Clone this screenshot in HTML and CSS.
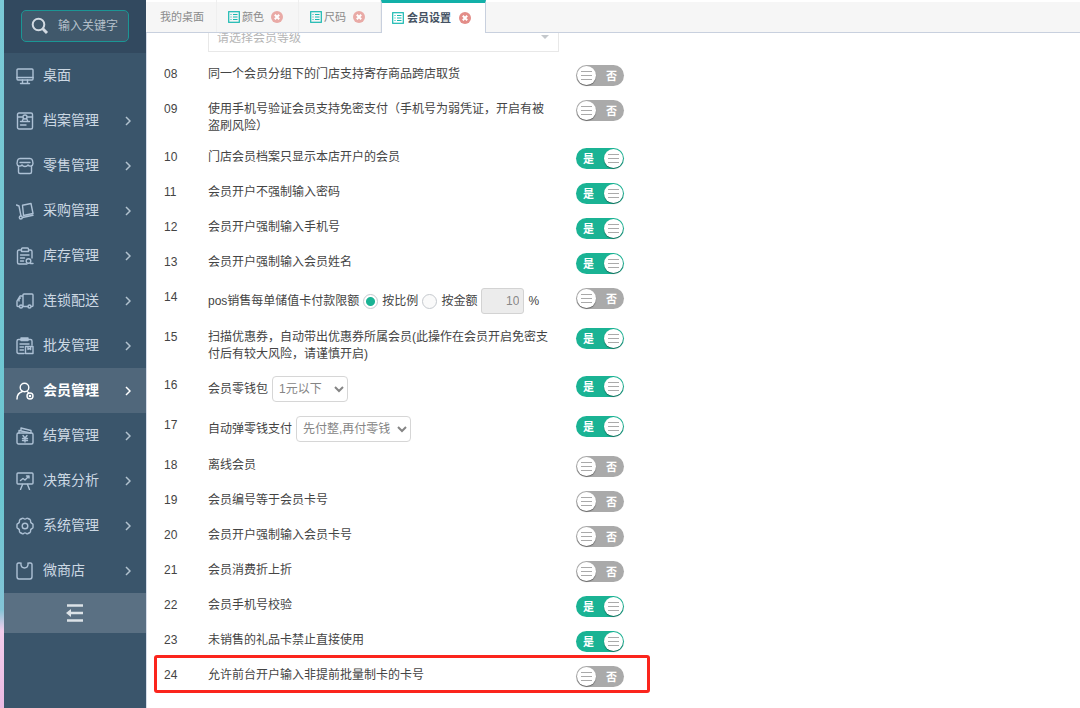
FILE: index.html
```
<!DOCTYPE html>
<html lang="zh-CN">
<head>
<meta charset="utf-8">
<title>会员设置</title>
<link rel="stylesheet" href="styles.css">
</head>
<body>
<div class="app">
  <aside class="sidebar">
    <div class="search-area">
      <label class="search">
        <svg class="search-icon" viewBox="0 0 18 18"><circle cx="7.5" cy="7.5" r="5.8"/><path d="M11.8 11.8 16 16" stroke-width="3"/></svg>
        <input type="text" placeholder="输入关键字" aria-label="输入关键字">
      </label>
    </div>
    <nav class="menu">
      <a class="item" href="#"><svg class="icon" viewBox="0 0 18 18"><rect x="1" y="2" width="16" height="11" rx="1"/><path d="M1 10.500H17M6.500 13v3M11.500 13v3M4.500 16.500h9"/></svg><span>桌面</span></a>
      <a class="item" href="#"><svg class="icon" viewBox="0 0 18 18"><rect x="1.500" y="1" width="15" height="16" rx="1.500"/><path d="M2 5h4.500M11.500 5h5M4.500 9.500h9M4.500 13h5.500"/><circle cx="9" cy="5" r="2"/><path d="M7.500 6.500 6.500 8.500M10.500 6.500l1 2"/></svg><span>档案管理</span><svg class="arrow" viewBox="0 0 6 10"><path d="m1 1 4 4-4 4"/></svg></a>
      <a class="item" href="#"><svg class="icon" viewBox="0 0 18 18"><path d="M4 1.500h10q2 0 2.500 2l.5 3q0 2-2 2.500-2 .5-3-1-1 1.500-3 1.500T6 8q-1 1.500-3 1T1 6.500l.5-3q.5-2 2.500-2ZM4 5.500h10M2.500 9v6q0 1.500 1.500 1.500h10q1.500 0 1.500-1.500V9"/></svg><span>零售管理</span><svg class="arrow" viewBox="0 0 6 10"><path d="m1 1 4 4-4 4"/></svg></a>
      <a class="item" href="#"><svg class="icon" viewBox="0 0 18 18"><path d="M.5 3 3 4l2 10M6.500 3.200 15 1.500l2 10-9.500 2ZM6.500 15.500 17 13.200"/><circle cx="4.800" cy="15.500" r="1.500"/></svg><span>采购管理</span><svg class="arrow" viewBox="0 0 6 10"><path d="m1 1 4 4-4 4"/></svg></a>
      <a class="item" href="#"><svg class="icon" viewBox="0 0 18 18"><path d="M5 3H3Q1.500 3 1.500 4.500v11Q1.500 17 3 17h8M13 3h1.500Q16 3 16 4.500V11M5.500 4.500V2q0-1 1-1h5q1 0 1 1v2.500ZM4.500 8h8.500M4.500 11h4M4.500 14h3M14.500 16.500H17"/><circle cx="12.500" cy="14" r="2.300"/></svg><span>库存管理</span><svg class="arrow" viewBox="0 0 6 10"><path d="m1 1 4 4-4 4"/></svg></a>
      <a class="item" href="#"><svg class="icon" viewBox="0 0 18 18"><path d="M3.500 14.500H2q-1 0-1-1V9l3-5h3v10.500h-.5M7 4V3q0-1 1-1h8q1 0 1 1v10.500q0 1-1 1h-.5M12 14.500H7M3 9V7l1.500-1"/><circle cx="5" cy="14.500" r="1.500"/><circle cx="13.500" cy="14.500" r="1.500"/></svg><span>连锁配送</span><svg class="arrow" viewBox="0 0 6 10"><path d="m1 1 4 4-4 4"/></svg></a>
      <a class="item" href="#"><svg class="icon" viewBox="0 0 18 18"><path d="M8 16.500H2.500Q1 16.500 1 15V4q0-1.500 1.500-1.500h12Q16 2.500 16 4v4M5 1h7v2.500H5ZM4 7h9M4 10h3.500M4 13h3.500M9.500 9.500h7.500v7H9.500ZM12 9.500v3l1.300-1 1.300 1v-3"/></svg><span>批发管理</span><svg class="arrow" viewBox="0 0 6 10"><path d="m1 1 4 4-4 4"/></svg></a>
      <a class="item active" href="#"><svg class="icon" viewBox="0 0 18 18"><circle cx="8.500" cy="5.500" r="4.300"/><path d="M1 17q0-6 5.500-7.500M11 9.500l1.500 1"/><circle cx="14" cy="14" r="3"/><circle cx="14" cy="14" r=".6"/></svg><span>会员管理</span><svg class="arrow" viewBox="0 0 6 10"><path d="m1 1 4 4-4 4"/></svg></a>
      <a class="item" href="#"><svg class="icon" viewBox="0 0 18 18"><rect x="1" y="6" width="16" height="11" rx="1.500"/><path d="M3 6V3.500L14.500 6M5 3.500V1l10 2.500V6M7 8.500l2 2.500 2-2.500M9 11v4M6.500 11.500h5M6.500 13.500h5"/></svg><span>结算管理</span><svg class="arrow" viewBox="0 0 6 10"><path d="m1 1 4 4-4 4"/></svg></a>
      <a class="item" href="#"><svg class="icon" viewBox="0 0 18 18"><rect x="1" y="1" width="16" height="11" rx="1"/><path d="m4.500 8.500 2.500-2 2 1.500 4-4M10.500 4H13v2M6.500 12.500l-2 5M11.500 12.500l2 5"/></svg><span>决策分析</span><svg class="arrow" viewBox="0 0 6 10"><path d="m1 1 4 4-4 4"/></svg></a>
      <a class="item" href="#"><svg class="icon" viewBox="0 0 18 18"><path d="M6 1.500q.8-.8 1.500 0 1.500 1.200 3 0 .7-.8 1.500 0l2 1q.8.500.5 1.500-.2 1.800 1.500 2.500 1 .3 1 1v3q0 .7-1 1-1.700.7-1.500 2.500.3 1-.5 1.500l-2 1q-.8.800-1.500 0-1.500-1.200-3 0-.7.800-1.500 0l-2-1q-.8-.5-.5-1.500.2-1.800-1.500-2.500-1-.3-1-1v-3q0-.7 1-1 1.700-.7 1.500-2.500-.3-1 .5-1.500Z"/><circle cx="9" cy="9" r="2.800"/></svg><span>系统管理</span><svg class="arrow" viewBox="0 0 6 10"><path d="m1 1 4 4-4 4"/></svg></a>
      <a class="item" href="#"><svg class="icon" viewBox="0 0 18 18"><path d="M4 1H2.500Q1 1 1 2.500v12Q1 17 3 17h11q2 0 2-2.500v-12Q16 1 14.500 1H13M5 1v2q.5 3 3.500 3T12 3V1"/></svg><span>微商店</span><svg class="arrow" viewBox="0 0 6 10"><path d="m1 1 4 4-4 4"/></svg></a>
    </nav>
    <button class="collapse" type="button" aria-label="收起菜单"><svg viewBox="0 0 18 18"><path d="M1 1.500h16M4 9h13M1 16.500h16"/><path class="solid" d="M0 9l5-4v8Z"/></svg></button>
  </aside>

  <div class="workspace">
    <div class="tabs">
      <a class="tab home" href="#">我的桌面</a>
      <div class="tab"><svg class="tab-icon" viewBox="0 0 12 12"><rect x=".7" y=".7" width="10.600" height="10.600"/><path d="M2.500 3.500h1M5 3.500h4.500M2.500 6h1M5 6h4.500M2.500 8.500h1M5 8.500h4.500"/></svg><a href="#">颜色</a><button class="close" type="button" aria-label="关闭"><svg viewBox="0 0 12 12"><circle cx="6" cy="6" r="6"/><path d="m3.800 3.800 4.400 4.400M8.200 3.800 3.800 8.200"/></svg></button></div>
      <div class="tab"><svg class="tab-icon" viewBox="0 0 12 12"><rect x=".7" y=".7" width="10.600" height="10.600"/><path d="M2.500 3.500h1M5 3.500h4.500M2.500 6h1M5 6h4.500M2.500 8.500h1M5 8.500h4.500"/></svg><a href="#">尺码</a><button class="close" type="button" aria-label="关闭"><svg viewBox="0 0 12 12"><circle cx="6" cy="6" r="6"/><path d="m3.800 3.800 4.400 4.400M8.200 3.800 3.800 8.200"/></svg></button></div>
      <div class="tab current"><svg class="tab-icon" viewBox="0 0 12 12"><rect x=".7" y=".7" width="10.600" height="10.600"/><path d="M2.500 3.500h1M5 3.500h4.500M2.500 6h1M5 6h4.500M2.500 8.500h1M5 8.500h4.500"/></svg><a href="#">会员设置</a><button class="close" type="button" aria-label="关闭"><svg viewBox="0 0 12 12"><circle cx="6" cy="6" r="6"/><path d="m3.800 3.800 4.400 4.400M8.200 3.800 3.800 8.200"/></svg></button></div>
    </div>

    <main class="content">
      <div class="settings">
        <div class="row level">
          <div class="level-field">
            <select aria-label="会员等级"><option>请选择会员等级</option></select>
            <svg viewBox="0 0 8 4"><path d="M0 0h8L4 4Z"/></svg>
          </div>
        </div>
        <div class="row"><span class="num">08</span><label class="text" for="s08">同一个会员分组下的门店支持寄存商品跨店取货</label><span class="switch"><input type="checkbox" id="s08"><span class="yes">是</span><span class="no">否</span></span></div>
        <div class="row"><span class="num">09</span><label class="text" for="s09">使用手机号验证会员支持免密支付（手机号为弱凭证，开启有被盗刷风险）</label><span class="switch"><input type="checkbox" id="s09"><span class="yes">是</span><span class="no">否</span></span></div>
        <div class="row"><span class="num">10</span><label class="text" for="s10">门店会员档案只显示本店开户的会员</label><span class="switch"><input type="checkbox" id="s10" checked><span class="yes">是</span><span class="no">否</span></span></div>
        <div class="row"><span class="num">11</span><label class="text" for="s11">会员开户不强制输入密码</label><span class="switch"><input type="checkbox" id="s11" checked><span class="yes">是</span><span class="no">否</span></span></div>
        <div class="row"><span class="num">12</span><label class="text" for="s12">会员开户强制输入手机号</label><span class="switch"><input type="checkbox" id="s12" checked><span class="yes">是</span><span class="no">否</span></span></div>
        <div class="row"><span class="num">13</span><label class="text" for="s13">会员开户强制输入会员姓名</label><span class="switch"><input type="checkbox" id="s13" checked><span class="yes">是</span><span class="no">否</span></span></div>
        <div class="row"><span class="num">14</span><div class="text fields"><label for="s14">pos销售每单储值卡付款限额</label><label class="choice"><input type="radio" name="limit" checked>按比例</label><label class="choice"><input type="radio" name="limit">按金额</label><input class="amount" type="text" value="10" aria-label="限额" disabled><span>%</span></div><span class="switch"><input type="checkbox" id="s14"><span class="yes">是</span><span class="no">否</span></span></div>
        <div class="row"><span class="num">15</span><label class="text" for="s15">扫描优惠券，自动带出优惠券所属会员(此操作在会员开启免密支付后有较大风险，请谨慎开启)</label><span class="switch"><input type="checkbox" id="s15" checked><span class="yes">是</span><span class="no">否</span></span></div>
        <div class="row"><span class="num">16</span><div class="text fields"><label for="s16">会员零钱包</label><select class="pick short" aria-label="会员零钱包"><option>1元以下</option></select></div><span class="switch"><input type="checkbox" id="s16" checked><span class="yes">是</span><span class="no">否</span></span></div>
        <div class="row"><span class="num">17</span><div class="text fields"><label for="s17">自动弹零钱支付</label><select class="pick" aria-label="自动弹零钱支付"><option>先付整,再付零钱</option></select></div><span class="switch"><input type="checkbox" id="s17" checked><span class="yes">是</span><span class="no">否</span></span></div>
        <div class="row"><span class="num">18</span><label class="text" for="s18">离线会员</label><span class="switch"><input type="checkbox" id="s18"><span class="yes">是</span><span class="no">否</span></span></div>
        <div class="row"><span class="num">19</span><label class="text" for="s19">会员编号等于会员卡号</label><span class="switch"><input type="checkbox" id="s19"><span class="yes">是</span><span class="no">否</span></span></div>
        <div class="row"><span class="num">20</span><label class="text" for="s20">会员开户强制输入会员卡号</label><span class="switch"><input type="checkbox" id="s20"><span class="yes">是</span><span class="no">否</span></span></div>
        <div class="row"><span class="num">21</span><label class="text" for="s21">会员消费折上折</label><span class="switch"><input type="checkbox" id="s21"><span class="yes">是</span><span class="no">否</span></span></div>
        <div class="row"><span class="num">22</span><label class="text" for="s22">会员手机号校验</label><span class="switch"><input type="checkbox" id="s22" checked><span class="yes">是</span><span class="no">否</span></span></div>
        <div class="row"><span class="num">23</span><label class="text" for="s23">未销售的礼品卡禁止直接使用</label><span class="switch"><input type="checkbox" id="s23" checked><span class="yes">是</span><span class="no">否</span></span></div>
        <div class="row marked"><span class="num">24</span><label class="text" for="s24">允许前台开户输入非提前批量制卡的卡号</label><span class="switch"><input type="checkbox" id="s24"><span class="yes">是</span><span class="no">否</span></span></div>
      </div>
    </main>
  </div>
</div>
</body>
</html>
```
FILE: styles.css
```
* { box-sizing: border-box; }

body {
  margin: 0;
  background: #fff;
  color: #444;
  font: 12px/17px "Liberation Sans", "Noto Sans CJK SC", sans-serif;
}

button, input, select { font: inherit; color: inherit; margin: 0; }
button { border: 0; padding: 0; background: none; cursor: pointer; }
a { color: inherit; text-decoration: none; }
svg { display: block; flex: none; fill: none; stroke: currentColor; }

.app {
  display: flex;
  height: 100vh;
  overflow: hidden;
  border-left: 4px solid;
  border-image: linear-gradient(#7bc9d6 0%, #6bc6d1 70%, #83c4d6 86%, #f3cdec 89%, #eab9e2 100%) 1;
}

/* Sidebar */
.sidebar { flex: none; width: 142px; background: #3a556b; color: #ccd8e3; }
.search-area { padding: 10px 17px 11px; background: #32495f; }
.search {
  display: flex;
  align-items: center;
  gap: 9px;
  height: 32px;
  padding: 0 9px;
  border: 1px solid #1b9695;
  border-radius: 5px;
  background: #40586b;
}
.search-icon { width: 18px; height: 18px; stroke-width: 2; color: #d2dae2; }
.search input { flex: 1; min-width: 0; padding: 0; border: 0; outline: 0; background: none; }
.search input::placeholder { color: #b5c0ca; opacity: 1; }

.item {
  display: flex;
  align-items: center;
  gap: 9px;
  height: 45px;
  padding: 0 15px 0 12px;
  font-size: 14px;
}
.icon { width: 18px; height: 18px; stroke-width: 1.400; color: #adc1d5; stroke-linecap: round; stroke-linejoin: round; }
.arrow { width: 6px; height: 10px; margin-left: auto; stroke-width: 1.500; color: #b2c2cf; }
.item.active { background: #50677b; color: #fff; font-weight: bold; }
.item.active svg { color: #fff; }
.collapse {
  display: flex;
  align-items: center;
  justify-content: center;
  width: 100%;
  height: 40px;
  background: #5a7083;
  color: #dce2e7;
}
.collapse svg { width: 18px; height: 18px; stroke-width: 2.500; }
.collapse .solid { fill: currentColor; stroke: none; }

/* Tabs */
.workspace { display: flex; flex: 1; flex-direction: column; min-width: 0; }
.tabs {
  display: flex;
  flex: none;
  height: 33px;
  background: linear-gradient(#fff 0 2px, #f6f6f6 2px);
  border-bottom: 1px solid #c8d0de;
  color: #8b8b8b;
  font-size: 11px;
}
.tab { display: flex; align-items: center; gap: 2px; padding: 2px 15px 0 11px; border-right: 1px solid #efefef; }
.tab.home { padding-left: 14px; padding-right: 12px; }
.tab-icon { width: 12px; height: 12px; stroke-width: 1.200; color: #18b9b1; }
.close { width: 12px; height: 12px; margin-left: 5px; color: #e9aaa6; }
.close svg { width: 12px; height: 12px; fill: currentColor; stroke: #fff; stroke-width: 2; }
.close circle { stroke: none; }
.tab.current {
  margin-bottom: -1px;
  padding: 0 14px 0 10px;
  border: solid #c8d0de;
  border-width: 0 1px;
  border-top: 3px solid #12b0a8;
  background: #fff;
  color: #455263;
  font-weight: bold;
}
.current .close { color: #e38d88; }

/* Settings list */
.content { flex: 1; min-height: 0; overflow: hidden; border-left: 1px solid #d5dce8; }
.settings { display: flex; flex-direction: column; gap: 14px; max-width: 512px; margin-top: -12px; padding: 0 16px 0 17px; }
.row {
  position: relative;
  display: grid;
  grid-template-columns: 44px minmax(0, 351px) 48px;
  align-items: start;
  min-height: 21px;
}
.row > .switch { margin-left: 17px; }
.num { padding-top: 1px; }
.text { margin-bottom: -1px; padding: 1px 6px 0 0; }
.fields { display: flex; align-items: center; gap: 4px; height: 26px; margin: 0; padding: 0; white-space: nowrap; }

.level-field { position: relative; grid-column: 2; height: 30px; }
.level-field select {
  width: 100%;
  height: 31px;
  padding: 3px 8px 0;
  appearance: none;
  border: 1px solid #e8e8e8;
  background: #fff;
  color: #b5b5b5;
}
.level-field svg { position: absolute; right: 10px; top: 14px; width: 8px; height: 4px; fill: #c4c8cc; stroke: none; }

.choice { display: flex; align-items: center; gap: 4px; }
.choice input {
  width: 15px;
  height: 15px;
  appearance: none;
  border: 1px solid #c5c9ce;
  border-radius: 50%;
  background: #fafafa;
}
.choice input:checked { background: radial-gradient(circle, #1ab394 0 4px, #fff 5px); }
.amount {
  width: 43px;
  height: 26px;
  padding: 0 4px;
  border: 1px solid #d3d3d3;
  border-radius: 3px;
  background: #ececec;
  color: #888;
  text-align: right;
}
.pick {
  width: 115px;
  height: 26px;
  padding: 0 2px;
  border: 1px solid #d6d6d6;
  border-radius: 4px;
  background: #fff;
  color: #858585;
}
.pick.short { width: 76px; }

/* Yes / no switch */
.switch { position: relative; display: block; width: 48px; height: 21px; color: #fff; font: bold 11px/21px "Noto Sans CJK SC", sans-serif; }
.switch input { display: block; width: 48px; height: 21px; appearance: none; border-radius: 11px; background: #aaa; }
.switch input:checked { background: #1ab394; }
.switch input::before {
  content: "";
  display: block;
  width: 19px;
  height: 19px;
  margin: 1px;
  border-radius: 50%;
  background:
    linear-gradient(#aaa 0 1px, transparent 1px 4px, #aaa 4px 5px, transparent 5px 8px, #aaa 8px 9px) center / 11px 9px no-repeat,
    #fff;
  box-shadow: 0 1px 1px rgba(0, 0, 0, .4);
}
.switch input:checked::before { margin-left: 28px; }
.switch span { position: absolute; top: 0; pointer-events: none; }
.yes { left: 7px; }
.no { right: 7px; }
.switch input:checked ~ .no, .switch input:not(:checked) ~ .yes { display: none; }

/* Highlight frame around a row */
.marked::after {
  content: "";
  position: absolute;
  inset: -11px -7px -6px -10px;
  border: 3px solid #fb251d;
  border-radius: 3px;
  pointer-events: none;
}
.tab.current { gap: 3px; }
```
